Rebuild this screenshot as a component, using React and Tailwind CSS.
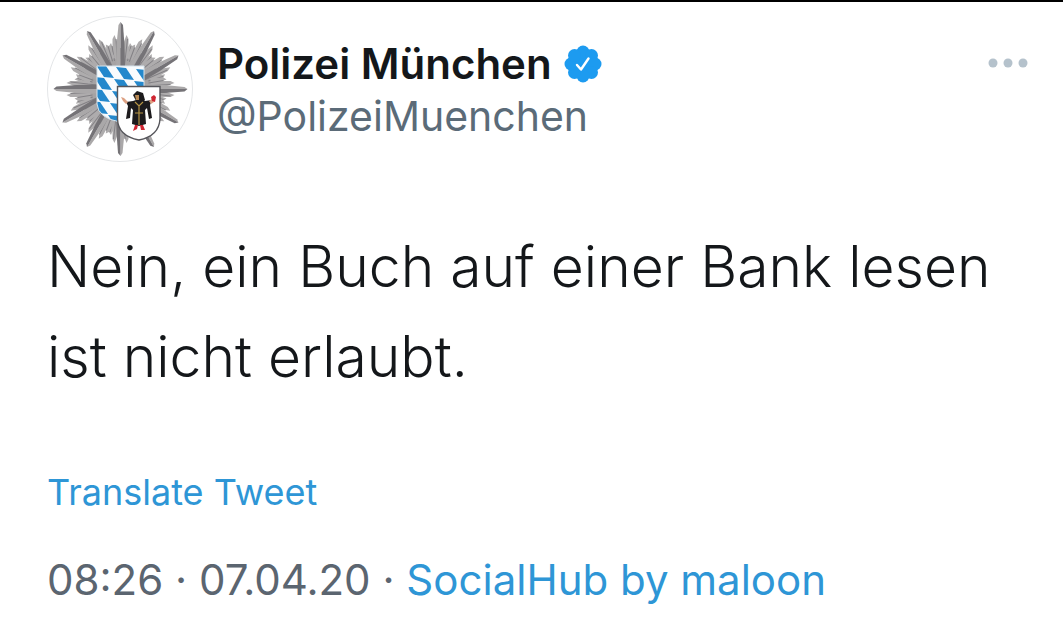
const SPIKES = [0, 30, 60, 90, 120, 150, 180, 210, 240, 270, 300, 330];

// top left corners of the blue lozenges
const LOZENGES = [
  [49, 49], [69, 51], [89, 53],
  [47, 61], [67, 63], [87, 65],
  [45, 73], [65, 75], [85, 77],
  [43, 85], [63, 87], [61, 99],
];

function Avatar() {
  return (
    <svg viewBox="0 0 146 146" className="size-36.5 shrink-0" role="img" aria-label="Polizei München">
      <circle cx="73" cy="73" r="72.5" fill="#fff" stroke="#e4e6e8" />
      <circle cx="73.5" cy="73" r="41" fill="#a5a3a4" />
      {/* each long ray is flanked by shorter parallel ones */}
      {SPIKES.map((angle) => (
        <g key={angle} transform={`translate(73.5 73) rotate(${angle})`}>
          <path d="M-11 -30 -11.5 -43 -9.5 -46 -8 -42 -8 -50 -6 -54 -3 -46 0 -20 3 -46 6 -54 8 -50 8 -42 9.5 -46 11.5 -43 11 -30Z" fill="#aeacad" />
          <path d="M-8.5 -43 -6 -28M-4.5 -50 -3 -24M7 -50 4 -24M10.5 -43 7 -28" stroke="#838185" strokeWidth="1" />
          <path d="M-4.5 -20 -4 -44 -2 -64 0 -67V-20Z" fill="#aaa8a9" />
          <path d="M0 -20V-67L2.5 -64 4 -44 4.5 -20Z" fill="#757377" />
        </g>
      ))}
      <defs>
        <clipPath id="bavaria">
          <path d="M50 50H97V88Q96 102 73 106Q51 102 50 88Z" />
        </clipPath>
      </defs>
      <g clipPath="url(#bavaria)">
        <path d="M50 50H97V108H50Z" fill="#f8fbfd" />
        {LOZENGES.map(([x, y]) => (
          <path key={`${x}-${y}`} d="M0 0 10 1 18 13 8 12Z" transform={`translate(${x} ${y})`} fill="#2488cc" />
        ))}
      </g>
      <path d="M50 50H97V88Q96 102 73 106Q51 102 50 88Z" fill="none" stroke="#d5e3ec" />
      <path d="M70.5 70.5H113V103Q112 120 92 124Q71 120 70.5 103Z" fill="#fff" stroke="#56565b" strokeWidth="1.4" />
      {/* Münchner Kindl */}
      <path d="M79 86 86 85 92 83 98 85 105 84 103 89 105 102 102 103 100 92 98 94 99 108 92 110 85 108 86 94 84 92 83 102 79 103 81 90Z" fill="#1d1b1d" />
      <path d="M86 79 90 75 96 77 98 84 95 87 90 86 88 83Z" fill="#1d1b1d" />
      <path d="M88 79H92V84L89 84Z" fill="#b98a55" />
      <path d="M88 86 92 90 96 86M92 90V109M88 97H96" fill="none" stroke="#b69445" strokeWidth="1.2" />
      <path d="M74 81 77 82 81 86 79 88 76 85ZM102 85 105 83 107 86 104 88Z" fill="#dda183" />
      <path d="M104 81 107 79 109 81 108 86 105 85ZM88 109 91 109 90 113 86 115ZM93 109 96 109 98 114 94 114Z" fill="#cf2632" />
    </svg>
  );
}

function VerifiedBadge() {
  return (
    <svg viewBox="0 0 38 38" className="size-9.5 shrink-0" role="img" aria-label="Verified account">
      <g fill="#1d9bf0">
        <circle cx="19" cy="19" r="14" />
        <circle cx="19" cy="7" r="6.5" />
        <circle cx="27.5" cy="10.5" r="6.5" />
        <circle cx="31" cy="19" r="6.5" />
        <circle cx="27.5" cy="27.5" r="6.5" />
        <circle cx="19" cy="31" r="6.5" />
        <circle cx="10.5" cy="27.5" r="6.5" />
        <circle cx="7" cy="19" r="6.5" />
        <circle cx="10.5" cy="10.5" r="6.5" />
      </g>
      <path d="M13 20 17 24.5 24.5 13.5" fill="none" stroke="#fff" strokeWidth="2.4" strokeLinecap="round" strokeLinejoin="round" />
    </svg>
  );
}

export default function App() {
  return (
    <article className="min-h-screen border-t-2 border-black bg-white px-[47px] pt-3.5 font-['Inter',sans-serif] text-[#14171a]">
      <header className="flex items-start gap-6">
        <Avatar />
        <div className="min-w-0 flex-1 pt-5.5">
          <div className="flex items-center gap-3">
            <h1 className="text-[42px] leading-[52px] font-semibold">Polizei München</h1>
            <VerifiedBadge />
          </div>
          <p className="text-[41px] leading-[52px] text-[#5b6b78]">@PolizeiMuenchen</p>
        </div>
        <button type="button" aria-label="More" className="-mr-3 mt-10.5 shrink-0">
          <svg viewBox="0 0 40 10" className="h-2.5 w-10" fill="#b5c2cc">
            <circle cx="5" cy="5" r="4.5" />
            <circle cx="20" cy="5" r="4.5" />
            <circle cx="35" cy="5" r="4.5" />
          </svg>
        </button>
      </header>

      <p className="mt-15 text-[57px] leading-[90px] font-light">
        Nein, ein Buch auf einer Bank lesen ist nicht erlaubt.
      </p>

      <a href="#translate" className="mt-15 block text-[36px] leading-[60px] text-[#2e96d6]">Translate Tweet</a>
      <p className="mt-7 text-[42px] leading-[60px] text-[#5b6570]">
        <time dateTime="2020-04-07T08:26">08:26 · 07.04.20</time> ·{' '}
        <a href="#source" className="text-[#2e96d6]">SocialHub by maloon</a>
      </p>
    </article>
  );
}
